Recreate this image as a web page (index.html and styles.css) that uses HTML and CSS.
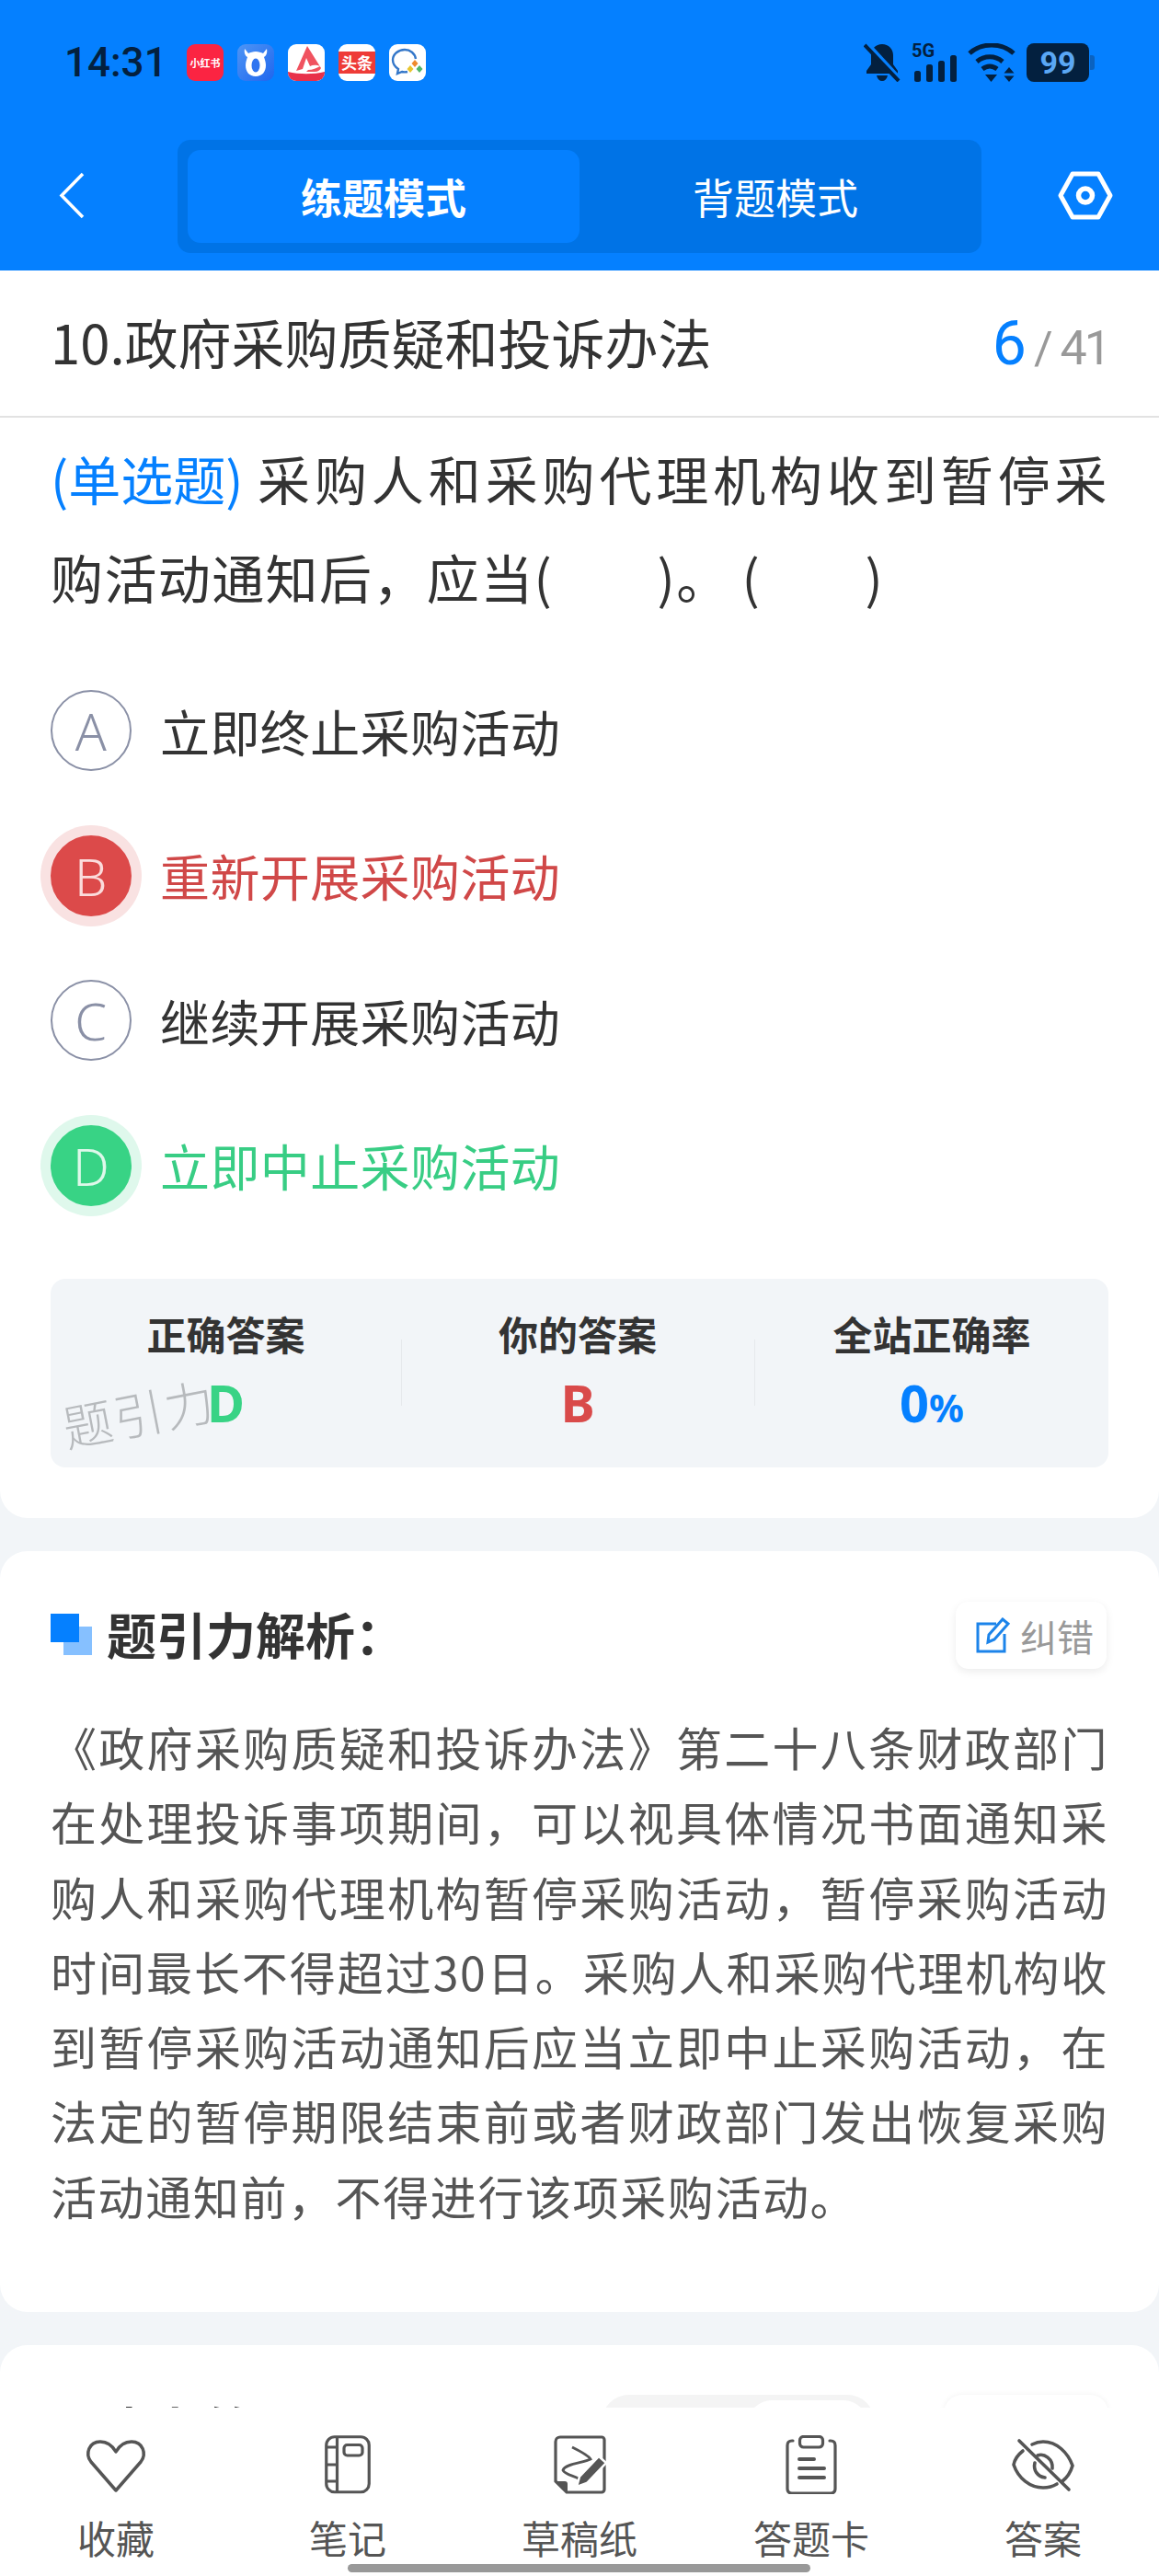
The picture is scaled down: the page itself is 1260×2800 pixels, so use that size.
FILE: index.html
```html
<!DOCTYPE html>
<html lang="zh-CN">
<head>
    <meta charset="UTF-8">
    <meta name="viewport" content="width=device-width, initial-scale=1.0">
    <title>练题模式</title>
    <link rel="stylesheet" href="styles.css">
</head>
<body>
<div class="tela">
    <header class="topo">
        <div class="statusBar">
            <div class="statusEsq">
                <span class="hora">14:31</span>
                <span class="appIcone appXhs">小红书</span>
                <span class="appIcone appNiu">
                    <svg width="30" height="32" viewBox="0 0 30 32"><path d="M3 1c-1 5 1 8 3 9-1 3-2 6-2 9 0 7 4 12 11 12s11-5 11-12c0-3-1-6-2-9 2-1 4-4 3-9l-4 5c-2-1-5-2-8-2s-6 1-8 2z" fill="#fff"/><ellipse cx="15" cy="19" rx="4.500" ry="7.500" fill="#2f74f0"/></svg>
                </span>
                <span class="appIcone appA">
                    <svg width="40" height="40" viewBox="0 0 40 40"><path d="M21 2 9 29l7-2 4-12 4 9c4-2 8-1 11 0-4 2-8 4-13 4l-2 2h9c4 0 6-2 7-4z" fill="#f0525f"/><path d="M0 30c12 3 28 3 40 0v10H0z" fill="#e8304a"/></svg>
                </span>
                <span class="appIcone appToutiao"><span class="faixaToutiao">头条</span></span>
                <span class="appIcone appChat">
                    <svg width="36" height="36" viewBox="0 0 36 36"><path d="M18 28c-2 .5-4 .5-6 0l-5 2 1-5C5 23 2 20 2 15 2 9 8 4 15 4c6 0 11 4 12 10" fill="none" stroke="#3477c9" stroke-width="2.400"/><path d="M26 15l3.500 4-3.500 4-3.500-4z" fill="#ef8a2c"/><path d="M21 21l3.500 4-3.500 4-3.500-4z" fill="#e8c52e"/><path d="M31 21l3.500 4-3.500 4-3.500-4z" fill="#4fb56a"/></svg>
                </span>
            </div>
            <div class="statusDir">
                <svg width="40" height="42" viewBox="0 0 40 42"><path d="M20 1C13 1 8 6 8 13v10l-5 7v3h34v-3l-5-7V13C32 6 27 1 20 1zM14 35h12c-1 4-3 6-6 6s-5-2-6-6z" fill="#03203f"/><path d="M4 0l36 39" stroke="#0580ff" stroke-width="4"/><path d="M1 2l37 39" stroke="#03203f" stroke-width="4"/></svg>
                <span class="sinal">
                    <span class="sinal5g">5G</span>
                    <svg width="49" height="29" viewBox="0 0 49 29"><rect x="3" y="17" width="7" height="12" rx="2.500"/><rect x="16" y="10" width="7" height="19" rx="2.500"/><rect x="29" y="6" width="7" height="23" rx="2.500"/><rect x="42" y="0" width="7" height="29" rx="2.500"/></svg>
                </span>
                <svg width="52" height="42" viewBox="0 0 52 42"><path d="M2 11C15-1 37-1 50 11" fill="none" stroke="#03203f" stroke-width="5"/><path d="M10 20c8-7 20-7 28 0" fill="none" stroke="#03203f" stroke-width="5"/><path d="M16 28c5-4 11-4 16 0" fill="none" stroke="#03203f" stroke-width="5"/><path d="M19 34h13l-6.500 8z" fill="#03203f"/><path d="M45 26l5.500 6.500h-11zM45 42l5.500-6.500h-11z" fill="#03203f"/></svg>
                <span class="bateria"><span class="bateriaNum">99</span></span>
            </div>
        </div>
        <div class="barraNav">
            <svg class="iconeVoltar" width="28" height="51" viewBox="0 0 28 51"><path d="M26 2 3 25.500 26 49" fill="none" stroke="#fff" stroke-width="3.500"/></svg>
            <div class="modos">
                <div class="modo modoAtivo">练题模式</div>
                <div class="modo">背题模式</div>
            </div>
            <svg class="iconeConfig" width="60" height="53" viewBox="0 0 60 53"><path d="M16 3h28l13 23.500L44 50H16L3 26.500z" fill="none" stroke="#fff" stroke-width="5" stroke-linejoin="round"/><circle cx="30" cy="26.500" r="7.500" fill="none" stroke="#fff" stroke-width="5.500"/></svg>
        </div>
    </header>

    <main class="conteudo">
        <section class="cartao cartaoQuestao">
            <div class="tituloQuestao">
                <span class="nomeCapitulo">10.政府采购质疑和投诉办法</span>
                <span class="contador"><span class="contadorAtual">6</span><span class="contadorBarra">/</span><span class="contadorTotal">41</span></span>
            </div>
            <div class="enunciado"><span class="tipoQuestao">(单选题)</span>采购人和采购代理机构收到暂停采购活动通知后，应当(&nbsp;&nbsp;&nbsp;&nbsp;&nbsp;&nbsp;&nbsp;&nbsp;)。&#8201;(&nbsp;&nbsp;&nbsp;&nbsp;&nbsp;&nbsp;&nbsp;&nbsp;)</div>
            <ul class="opcoes">
                <li class="opcao"><span class="letra">A</span><span class="textoOpcao">立即终止采购活动</span></li>
                <li class="opcao opcaoErrada"><span class="letra">B</span><span class="textoOpcao">重新开展采购活动</span></li>
                <li class="opcao"><span class="letra">C</span><span class="textoOpcao">继续开展采购活动</span></li>
                <li class="opcao opcaoCerta"><span class="letra">D</span><span class="textoOpcao">立即中止采购活动</span></li>
            </ul>
            <div class="resumo">
                <div class="resumoItem">
                    <div class="resumoTitulo">正确答案</div>
                    <div class="resumoValor valorCerto">D</div>
                    <span class="marcaDagua">题引力</span>
                </div>
                <div class="resumoItem">
                    <div class="resumoTitulo">你的答案</div>
                    <div class="resumoValor valorErrado">B</div>
                </div>
                <div class="resumoItem">
                    <div class="resumoTitulo">全站正确率</div>
                    <div class="resumoValor valorTaxa">0<small>%</small></div>
                </div>
            </div>
        </section>

        <section class="cartao cartaoAnalise">
            <div class="analiseTopo">
                <div class="analiseTitulo">
                    <span class="marcador"></span>
                    <span>题引力解析：</span>
                </div>
                <div class="botaoErro">
                    <svg width="38" height="39" viewBox="0 0 38 39"><path d="M22 7H2v30h29V18" fill="none" stroke="#1c84ea" stroke-width="3"/><path d="M13 27l1-8L29 2l6 5-15 17z" fill="none" stroke="#1c84ea" stroke-width="3"/></svg>
                    <span>纠错</span>
                </div>
            </div>
            <p class="analiseTexto">《政府采购质疑和投诉办法》第二十八条财政部门在处理投诉事项期间，可以视具体情况书面通知采购人和采购代理机构暂停采购活动，暂停采购活动时间最长不得超过30日。采购人和采购代理机构收到暂停采购活动通知后应当立即中止采购活动，在法定的暂停期限结束前或者财政部门发出恢复采购活动通知前，不得进行该项采购活动。</p>
        </section>

        <section class="cartao cartaoProxima">
            <div class="analiseTopo">
                <div class="analiseTitulo">
                    <span class="marcador"></span>
                    <span>考友笔记：</span>
                </div>
                <div class="filtros">
                    <div class="filtroGrupo"><div class="filtroAtivo"></div></div>
                    <div class="filtroBotao"></div>
                </div>
            </div>
        </section>
    </main>

    <nav class="rodape">
        <div class="rodapeItem">
            <svg width="70" height="64" viewBox="0 0 70 64"><path d="M35 60 8 29C1 20 6 7 18 7c7 0 13 4 17 11 4-7 10-11 17-11 12 0 17 13 10 22z" fill="none" stroke="#555" stroke-width="3.500" stroke-linejoin="round"/></svg>
            <span>收藏</span>
        </div>
        <div class="rodapeItem">
            <svg width="70" height="64" viewBox="0 0 70 64"><rect x="11.750" y="1.750" width="46.500" height="60" rx="9" fill="none" stroke="#555" stroke-width="3.200"/><path d="M23.500 2v60M12 13h12M12 32h12M12 50h12" stroke="#555" stroke-width="3.200"/><rect x="31" y="10.500" width="20" height="11.500" rx="3.500" fill="none" stroke="#555" stroke-width="3.200"/></svg>
            <span>笔记</span>
        </div>
        <div class="rodapeItem">
            <svg width="70" height="64" viewBox="0 0 70 64"><path d="M14 2h45a3 3 0 0 1 3 3v54a3 3 0 0 1-3 3H21L9 50V7a5 5 0 0 1 5-5z" fill="none" stroke="#555" stroke-width="3.200"/><path d="M9 50h10c2 0 3 1 3 3v9z" fill="#555"/><path d="M27 13c8 4 18 9 20 13-8 4-28 5-30 12 2 6 20 7 21 13" fill="none" stroke="#555" stroke-width="2.800"/><path d="M56 23l8 7-21 22-11 4 3-11z" fill="#555" stroke="#fff" stroke-width="2.500"/></svg>
            <span>草稿纸</span>
        </div>
        <div class="rodapeItem">
            <svg width="70" height="64" viewBox="0 0 70 64"><path d="M15 6h-1c-3.500 0-5 2-5 5v47c0 3.500 2 5 5 5h42c3.500 0 5-1.500 5-5V11c0-3-1.500-5-5-5h-1" fill="none" stroke="#555" stroke-width="3.200" stroke-linecap="round"/><rect x="22.500" y="1.500" width="25" height="11.500" rx="4" fill="none" stroke="#555" stroke-width="3.200"/><path d="M22 26h16M22 36h27M22 46h27" stroke="#555" stroke-width="4" stroke-linecap="round"/></svg>
            <span>答题卡</span>
        </div>
        <div class="rodapeItem">
            <svg width="70" height="64" viewBox="0 0 70 64"><path d="M13 17C8 21 4 26 3 32c5 15 18 25 32 25 6 0 11-1.500 15-4M23 10c4-2 8-3 12-3 15 0 27 12 32 26-2 7-6 13-11 17" fill="none" stroke="#555" stroke-width="3.600" stroke-linecap="round"/><path d="M29 22c7-3 17 4 16 14M26 30c-2 8 3 15 11 16" fill="none" stroke="#555" stroke-width="3.600" stroke-linecap="round"/><path d="M9 6l54 53" stroke="#555" stroke-width="3.600" stroke-linecap="round"/></svg>
            <span>答案</span>
        </div>
    </nav>
    <div class="homeBar"></div>
</div>
</body>
</html>
```

FILE: styles.css
```css
* {
    box-sizing: border-box;
}

html, body {
    margin: 0;
    padding: 0;
}

body {
    background-color: #f2f5f8;
    font-family: "Noto Sans CJK SC", "Noto Sans", sans-serif;
    color: #333;
}

.tela {
    position: relative;
    width: 1260px;
    height: 2800px;
    overflow: hidden;
}

/* topo azul */
.topo {
    background-color: #0580ff;
    height: 294px;
}

.statusBar {
    height: 136px;
    padding: 47px 70px 0 70px;
    display: flex;
    justify-content: space-between;
    align-items: flex-start;
}

.statusEsq, .statusDir {
    display: flex;
    align-items: center;
    height: 42px;
}

.hora {
    font-family: "Roboto", sans-serif;
    font-weight: 500;
    font-size: 44px;
    line-height: 42px;
    color: #03203f;
    width: 133px;
}

.appIcone {
    width: 40px;
    height: 40px;
    border-radius: 9px;
    margin-right: 15px;
    display: flex;
    align-items: center;
    justify-content: center;
    overflow: hidden;
    background-color: #fff;
}

.appXhs {
    background-color: #fb2442;
    color: #fff;
    font-size: 11px;
    font-weight: 700;
    white-space: nowrap;
}

.appNiu {
    background: linear-gradient(135deg, #4e95f5, #1f66ee);
}

.faixaToutiao {
    display: block;
    width: 100%;
    background-color: #ee3b37;
    color: #fff;
    font-size: 17px;
    font-weight: 700;
    line-height: 24px;
    text-align: center;
    white-space: nowrap;
}

.statusDir {
    gap: 12px;
    margin-right: 6px;
}

.sinal {
    position: relative;
    width: 49px;
    height: 42px;
    fill: #03203f;
}

.sinal5g {
    position: absolute;
    left: 0;
    top: -2px;
    font-family: "Roboto", sans-serif;
    font-weight: 700;
    font-size: 20px;
    line-height: 20px;
    color: #03203f;
}

.sinal svg {
    position: absolute;
    left: 0;
    top: 13px;
}

.bateria {
    width: 68px;
    height: 42px;
    background-color: #03203f;
    border-radius: 8px;
    display: flex;
    align-items: center;
    justify-content: center;
    position: relative;
}

.bateria::after {
    content: "";
    position: absolute;
    right: -6px;
    top: 13px;
    width: 5px;
    height: 16px;
    background-color: #0a62c0;
    border-radius: 0 3px 3px 0;
}

.bateriaNum {
    font-family: "Roboto", sans-serif;
    font-weight: 700;
    font-size: 34px;
    line-height: 42px;
    color: #5aa7f5;
}

.barraNav {
    height: 158px;
    position: relative;
    display: flex;
    justify-content: center;
    padding-top: 16px;
}

.iconeVoltar {
    position: absolute;
    left: 64px;
    top: 51px;
}

.iconeConfig {
    position: absolute;
    left: 1150px;
    top: 50px;
}

.modos {
    width: 874px;
    height: 123px;
    background-color: #0073e6;
    border-radius: 14px;
    padding: 11px;
    display: flex;
}

.modo {
    flex: 1;
    display: flex;
    align-items: center;
    justify-content: center;
    color: #fff;
    font-size: 45px;
    border-radius: 14px;
}

.modoAtivo {
    background-color: #0580ff;
    font-weight: 700;
}

/* cartoes */
.conteudo {
    display: flex;
    flex-direction: column;
    gap: 36px;
}

.cartao {
    background-color: #fff;
    border-radius: 30px;
}

.cartaoQuestao {
    border-radius: 0 0 30px 30px;
    height: 1356px;
}

.tituloQuestao {
    height: 160px;
    padding: 0 55px 5px;
    border-bottom: 2px solid #e2e2e2;
    display: flex;
    justify-content: space-between;
    align-items: center;
}

.nomeCapitulo {
    font-size: 58px;
}

.contador {
    display: flex;
    align-items: baseline;
    color: #999;
    font-family: "Roboto", sans-serif;
    margin-top: 5px;
}

.contadorAtual {
    color: #0580ff;
    font-size: 66px;
}

.contadorBarra {
    font-size: 50px;
    margin: 0 8px;
}

.contadorTotal {
    font-size: 52px;
    letter-spacing: -3px;
}

.enunciado {
    padding: 12px 55px 0;
    font-size: 57px;
    line-height: 107px;
    letter-spacing: 1.400px;
    text-align: justify;
}

.tipoQuestao {
    display: inline-block;
    color: #0580ff;
    letter-spacing: 0;
    margin-right: 12px;
}

.opcoes {
    list-style: none;
    margin: 70px 0 0;
    padding: 0 55px;
    display: flex;
    flex-direction: column;
    gap: 69.500px;
}

.opcao {
    display: flex;
    align-items: center;
    height: 88px;
    gap: 31px;
    font-size: 54px;
    letter-spacing: 0.400px;
}

.letra {
    width: 88px;
    height: 88px;
    border-radius: 50%;
    border: 2.500px solid #8a90a6;
    color: #8a90a6;
    font-family: "Noto Sans", sans-serif;
    font-size: 56px;
    font-weight: 300;
    display: flex;
    align-items: center;
    justify-content: center;
    flex-shrink: 0;
}

.opcaoErrada .letra {
    background-color: #dc4a4a;
    border-color: #dc4a4a;
    color: #fbdcdc;
    box-shadow: 0 0 0 11px #f9e2e2;
}

.opcaoErrada .textoOpcao {
    color: #d04848;
}

.opcaoCerta .letra {
    background-color: #38d385;
    border-color: #38d385;
    color: #def8ea;
    box-shadow: 0 0 0 11px #dff8ec;
}

.opcaoCerta .textoOpcao {
    color: #38cd84;
}

.resumo {
    margin: 79px 55px 0;
    height: 205px;
    background-color: #f2f5f8;
    border-radius: 16px;
    display: grid;
    grid-template-columns: 381px 384px 386px;
}

.resumoItem {
    position: relative;
    height: 100%;
    padding-top: 29px;
    text-align: center;
}

.resumoItem + .resumoItem::before {
    content: "";
    position: absolute;
    left: 0;
    top: 66px;
    height: 72px;
    width: 1px;
    background-color: #e6e9ec;
}

.resumoTitulo {
    font-size: 43px;
    font-weight: 700;
    line-height: 60px;
}

.resumoValor {
    font-family: "Noto Sans", sans-serif;
    font-size: 56px;
    font-weight: 700;
    line-height: 68px;
    margin-top: 11px;
}

.resumoValor small {
    font-size: 42px;
}

.valorCerto {
    color: #38d385;
}

.valorErrado {
    color: #d94a4a;
}

.valorTaxa {
    color: #0580ff;
}

.marcaDagua {
    position: absolute;
    left: 12px;
    top: 110px;
    font-size: 54px;
    font-weight: 300;
    line-height: 70px;
    color: #b7babd;
    transform: rotate(-11deg);
    letter-spacing: 2px;
    white-space: nowrap;
}

.cartaoAnalise {
    height: 827px;
    padding: 0 55px;
}

.analiseTopo {
    display: flex;
    justify-content: space-between;
    align-items: flex-start;
    padding-top: 55px;
}

.analiseTitulo {
    display: flex;
    align-items: center;
    gap: 16px;
    font-size: 54px;
    font-weight: 700;
    line-height: 70px;
}

.marcador {
    width: 45px;
    height: 45px;
    background:
        linear-gradient(#0580ff, #0580ff) 0 0 / 31px 31px no-repeat,
        linear-gradient(#86c0ff, #86c0ff) 100% 100% / 31px 31px no-repeat;
}

.botaoErro {
    width: 164px;
    height: 73px;
    margin-right: 2px;
    border-radius: 14px;
    box-shadow: 0 3px 10px rgba(0, 0, 0, 0.08);
    display: flex;
    align-items: center;
    padding-left: 22px;
    gap: 10px;
    color: #999;
    font-size: 40px;
    white-space: nowrap;
}

.analiseTexto {
    margin: 44px 0 0;
    font-size: 50px;
    line-height: 81.300px;
    letter-spacing: 1.600px;
    color: #555;
    text-align: justify;
}

.cartaoProxima {
    height: 300px;
    padding: 0 55px;
}

.cartaoProxima .analiseTopo {
    padding-top: 56px;
}

.filtros {
    display: flex;
    gap: 75px;
    margin-top: -2px;
}

.filtroGrupo {
    width: 297px;
    height: 73px;
    background-color: #f4f4f4;
    border-radius: 30px;
    padding: 6px 8px;
    display: flex;
    justify-content: flex-end;
}

.filtroAtivo {
    width: 130px;
    height: 60px;
    background-color: #fff;
    border-radius: 26px;
}

.filtroBotao {
    width: 179px;
    height: 73px;
    background-color: #fff;
    border-radius: 20px;
    box-shadow: 0 0 6px rgba(0, 0, 0, 0.06);
}

/* rodape fixo */
.rodape {
    position: absolute;
    left: 0;
    top: 2617px;
    width: 1260px;
    height: 183px;
    background-color: #fff;
    display: flex;
    justify-content: center;
}

.rodapeItem {
    width: 252px;
    display: flex;
    flex-direction: column;
    align-items: center;
    color: #555;
    font-size: 42px;
    line-height: 60px;
    padding-top: 30px;
}

.rodapeItem span {
    margin-top: 17px;
}

.homeBar {
    position: absolute;
    left: 378px;
    top: 2787px;
    width: 503px;
    height: 9px;
    background-color: #999;
    border-radius: 5px;
}
```
